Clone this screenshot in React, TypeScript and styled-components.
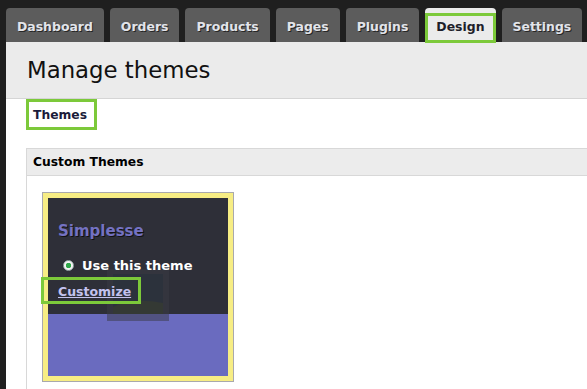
import React from "react";
import styled, { createGlobalStyle } from "styled-components";

// 상단 탭 목록
const tabs: Array<string> = ["Dashboard", "Orders", "Products", "Pages", "Plugins", "Design", "Settings"];

const GlobalStyle = createGlobalStyle`
body {
    margin: 0;
    background-color: #1f1f1f;
    font-family: "DejaVu Sans", Verdana, sans-serif;
    overflow: hidden;
}
`;

export default function App() {
    return (
        <>
            <GlobalStyle />
            <TopNav>
                {tabs.map((t) => (
                    <Tab key={t} active={t === "Design"}>{t}</Tab>
                ))}
            </TopNav>

            <Main>
                <PageHeader>
                    <Title>Manage themes</Title>
                </PageHeader>

                <SubTab>Themes</SubTab>

                <Section>
                    <SectionHeader>Custom Themes</SectionHeader>
                    <SectionBody>
                        <ThemeCard>
                            <CardInner>
                                <Preview>
                                    {/* 흐릿한 미리보기 이미지 */}
                                    <Ghost width="62" height="52" viewBox="0 0 62 52">
                                        <rect x="0" y="0" width="62" height="52" fill="#3a3b44" />
                                        <rect x="6" y="5" width="50" height="40" fill="#2c3640" />
                                        <path d="M6 38 Q25 28 56 34 L56 45 L6 45 Z" fill="#3a4332" />
                                    </Ghost>
                                    <ThemeName>Simplesse</ThemeName>
                                    <UseRow>
                                        <Radio />
                                        <span>Use this theme</span>
                                    </UseRow>
                                    <CustomizeLink href="#">Customize</CustomizeLink>
                                </Preview>
                                <Footer />
                            </CardInner>
                        </ThemeCard>
                    </SectionBody>
                </Section>
            </Main>
        </>
    );
}

const TopNav = styled.div`
display: flex;
gap: 6px;
padding: 8px 0 0 6px;
height: 34px;
white-space: nowrap;
`;

const Tab = styled.div<{ active?: boolean }>`
position: relative;
display: flex;
align-items: center;
padding: 2px 11px 0;

background-color: ${(p) => (p.active ? "#ebebeb" : "#5c5c5c")};
color: ${(p) => (p.active ? "#1e1e2a" : "#e2e4ea")};

border-radius: 4px 4px 0 0;
font-size: 12.45px;
font-weight: bold;
text-shadow: ${(p) => (p.active ? "none" : "1px 1px 0 #262626")};

&::after {
    content: "";
    display: ${(p) => (p.active ? "block" : "none")};
    position: absolute;
    top: 5px;
    left: 0;
    right: 0;
    bottom: -1px;
    border: 3px solid #7cc93a;
}
`;

const Main = styled.div`
margin-left: 6px;
min-height: 347px;
background-color: #fff;
`;

const PageHeader = styled.div`
display: flex;
align-items: center;
height: 56px;
padding-left: 21px;

background-color: #ebebeb;
border-bottom: 1px solid #d5d5d5;
`;

const Title = styled.h1`
margin: 0;
font-size: 22.8px;
font-weight: normal;
color: #111;
`;

const SubTab = styled.div`
display: flex;
align-items: center;
width: 61px;
height: 25px;
margin-left: 20px;
padding-left: 4px;

border: 3px solid #7cc93a;
color: #1b1b3a;
font-size: 12.3px;
font-weight: bold;
`;

const Section = styled.div`
margin: 18px -4px 0 20px;
border-left: 1px solid #d8d8d8;
`;

const SectionHeader = styled.div`
display: flex;
align-items: center;
height: 26px;
padding-left: 6px;

background-color: #ececec;
border-top: 1px solid #d8d8d8;
border-bottom: 1px solid #d8d8d8;
font-size: 12.3px;
font-weight: bold;
color: #000;
`;

const SectionBody = styled.div`
padding: 16px 0 20px 15px;
`;

const ThemeCard = styled.div`
width: 190px;
height: 188px;
border: 1px solid #a9a9ad;
`;

const CardInner = styled.div`
display: flex;
flex-direction: column;
height: 100%;
box-sizing: border-box;
border: 5px solid #f7ed84;
`;

const Preview = styled.div`
position: relative;
display: flex;
flex-direction: column;
height: 116px;
box-sizing: border-box;
padding: 24px 0 0 10px;

background-color: #2e2f38;
`;

const Ghost = styled.svg`
position: absolute;
left: 59px;
top: 71px;
opacity: 0.5;
`;

const ThemeName = styled.div`
position: relative;
color: #7472c2;
font-size: 15px;
font-weight: bold;
text-shadow: 1px 1px 0 #111;
`;

const UseRow = styled.div`
position: relative;
display: flex;
align-items: center;
gap: 8px;
margin: 18px 0 0 5px;

color: #fff;
font-size: 13px;
font-weight: bold;
`;

const Radio = styled.span`
width: 11px;
height: 11px;
box-sizing: border-box;
border-radius: 50%;
background: radial-gradient(circle, #2fa84a 0 2.5px, #f4f4f4 3px);
border: 1px solid #9aa;
`;

const CustomizeLink = styled.a`
position: relative;
align-self: flex-start;
margin-top: 11px;

color: #c3c2ee;
font-size: 12.5px;
font-weight: bold;
text-decoration: underline;

&::after {
    content: "";
    position: absolute;
    top: -7px;
    left: -17px;
    right: -10px;
    bottom: -5px;
    border: 3px solid #7cc93a;
}
`;

const Footer = styled.div`
flex: 1;
background-color: #6a6bbf;
`;
